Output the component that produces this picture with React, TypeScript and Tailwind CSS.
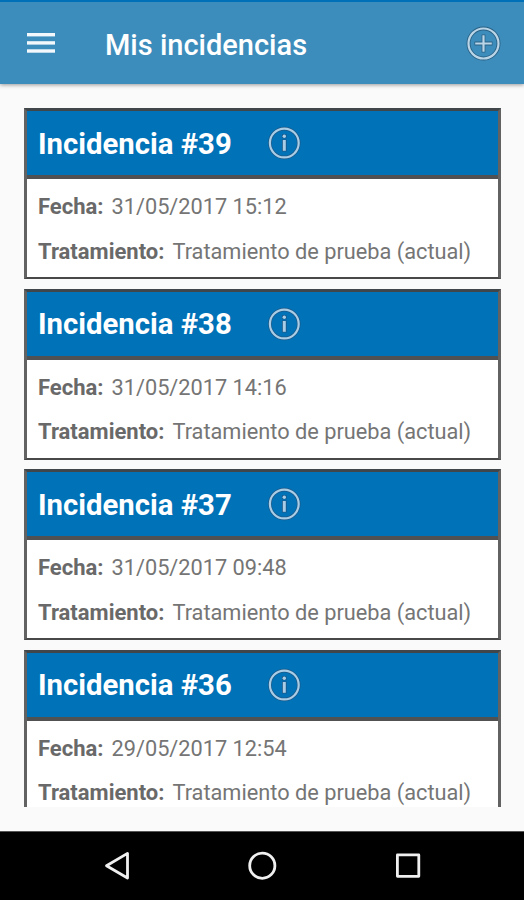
const incidents = [
  { id: 39, date: "31/05/2017 15:12" },
  { id: 38, date: "31/05/2017 14:16" },
  { id: 37, date: "31/05/2017 09:48" },
  { id: 36, date: "29/05/2017 12:54" },
];

function MenuIcon() {
  return (
    <svg width="28" height="22" viewBox="0 0 28 22" fill="#f3f8fc">
      <rect y="1" width="28" height="3.4" />
      <rect y="9.2" width="28" height="3.4" />
      <rect y="17.3" width="28" height="3.4" />
    </svg>
  );
}

function AddIcon() {
  return (
    <svg width="36" height="36" viewBox="0 0 36 36" fill="none">
      <g stroke="#2a6285">
        <circle cx="17.5" cy="18.5" r="15" strokeWidth="4" />
        <path d="M17.5 9.5v18M8.5 18.5h18" strokeWidth="3.8" />
      </g>
      <g stroke="#b9d5e7">
        <circle cx="17.5" cy="18.5" r="15" strokeWidth="2.2" />
        <path d="M17.5 10.2v16.6M9.2 18.5h16.6" strokeWidth="2.2" />
      </g>
    </svg>
  );
}

function InfoIcon() {
  return (
    <svg width="34" height="34" viewBox="0 0 34 34" fill="none">
      <circle cx="17.3" cy="17" r="14.4" stroke="#1c5886" strokeWidth="3.6" />
      <circle cx="17.3" cy="17" r="14.4" stroke="#a9cde6" strokeWidth="2.2" />
      <path d="M17.3 13.4v12M17.3 8.2v4" stroke="#1c5886" strokeWidth="4.6" />
      <path d="M17.3 14v10.8" stroke="#a9cde6" strokeWidth="3" />
      <circle cx="17.3" cy="10.3" r="1.7" fill="#a9cde6" />
    </svg>
  );
}

function AppBar() {
  return (
    <header className="z-10 flex h-[84px] shrink-0 items-center border-t-2 border-[#0070b9] bg-[#3d8dbc] pr-[22px] pl-[27px] text-white shadow-[0_1px_4px_rgba(0,0,0,0.4)]">
      <MenuIcon />
      <h1 className="mt-[3px] ml-[50px] flex-1 text-[29px] leading-[40px] font-medium">Mis incidencias</h1>
      <AddIcon />
    </header>
  );
}

function IncidentCard({ id, date }: { id: number; date: string }) {
  return (
    <article className="h-[171px] shrink-0 border-[3px] border-b-2 border-[#626262] border-t-[#41464a] border-b-[#484848] bg-white text-[21.75px] leading-[32px] whitespace-nowrap text-[#757575]">
      <header className="flex h-[68px] items-center border-b-4 border-[#505153] bg-[#0072b8] pl-[11px]">
        <h2 className="mt-px w-[229px] text-[29.3px] font-bold text-white">Incidencia #{id}</h2>
        <InfoIcon />
      </header>
      <p className="mt-[12px] flex gap-2 pl-[11px]">
        <b className="text-[22px] text-[#696969]">Fecha:</b>
        <span>{date}</span>
      </p>
      <p className="mt-[12.5px] flex gap-2 pl-[11px]">
        <b className="text-[22px] text-[#696969]">Tratamiento:</b>
        <span>Tratamiento de prueba (actual)</span>
      </p>
    </article>
  );
}

function NavigationBar() {
  return (
    <nav className="mt-6 flex h-[69px] shrink-0 items-center justify-center gap-[113px] border-t border-[#555] bg-black">
      <svg width="32" height="32" viewBox="0 0 32 32" fill="none" stroke="#f0f0f0" strokeWidth="2.8" strokeLinejoin="round">
        <path d="M5.5 15.7 26.5 3.4v24.6z" />
      </svg>
      <svg width="32" height="32" viewBox="0 0 32 32" fill="none" stroke="#f0f0f0" strokeWidth="2.8">
        <circle cx="16.3" cy="15.7" r="12.6" />
      </svg>
      <svg width="32" height="32" viewBox="0 0 32 32" fill="none" stroke="#f0f0f0" strokeWidth="2.8" strokeLinejoin="round">
        <rect x="6.4" y="4.9" width="21.4" height="21.4" />
      </svg>
    </nav>
  );
}

export default function App() {
  return (
    <div className="flex h-[900px] w-[524px] flex-col bg-[#fafafa] font-[Roboto,sans-serif]">
      <AppBar />
      <main className="mt-6 mr-[23px] ml-6 flex h-[699px] flex-col gap-[9.6px] overflow-hidden">
        {incidents.map((item) => (
          <IncidentCard key={item.id} {...item} />
        ))}
      </main>
      <NavigationBar />
    </div>
  );
}
